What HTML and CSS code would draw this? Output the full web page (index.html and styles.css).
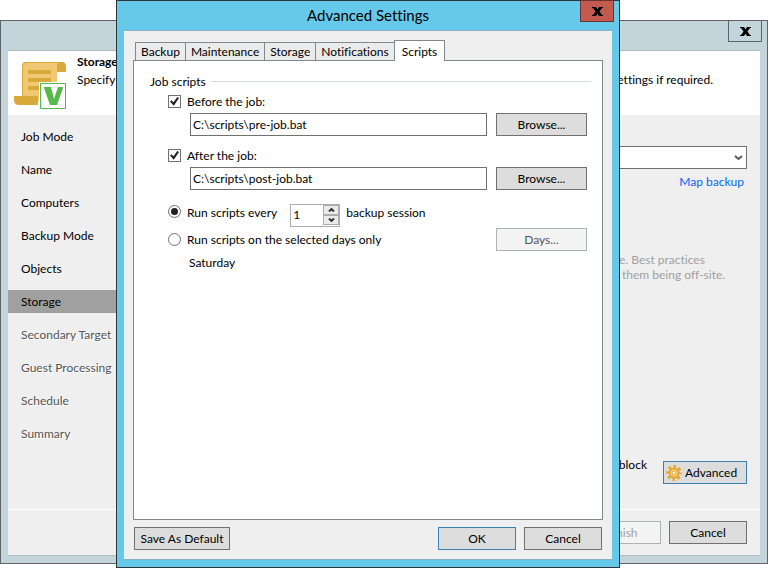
FILE: index.html
```html
<!DOCTYPE html>
<html lang="en">
<head>
<meta charset="UTF-8">
<meta name="viewport" content="width=device-width, initial-scale=1.0">
<title>Advanced Settings</title>
<link rel="stylesheet" href="styles.css">
</head>
<body>
<div class="wizard">
    <div class="wizard-bar">
        <button type="button" class="close" aria-label="Close wizard">
            <svg width="11" height="9" viewBox="0 0 11 9"><path d="M0 0h4l1.500 2.300L7 0h4v1h-1L7.500 4.500 10 8h1v1H7L5.500 6.700 4 9H0V8h1l2.500-3.500L1 1H0z"/></svg>
        </button>
    </div>
    <div class="wizard-content">
        <header class="wizard-header">
            <svg class="logo" width="54" height="50" viewBox="0 0 54 50">
                <path fill="#d9a93c" d="M13 1h35c3 0 4 2 4 5v5h-9z"/>
                <path fill="#f0c874" d="M12 1h34c-3 1-3 3-3 6v33H8V6c0-3 1-5 4-5z"/>
                <path fill="#d9a93c" d="M8 35V6c0-3 1-5 4-5h34v1H13c-3 0-4 2-4 4v29zM14 9h23v4H14zM14 17h23v4H14zM14 25h23v4H14zM0 35h24v9H5c-3 0-5-2-5-5z"/>
                <path fill="#fff" d="M25 21h28v28H25z"/>
                <path fill="#fff" stroke="#54b948" d="M26.500 22.500h25v25h-25z"/>
                <path fill="#54b948" d="M30 26h7l3 12 4-12h5v1l-6 17h-7l-6-17z"/>
            </svg>
            <div class="header-text">
                <h1>Storage</h1>
                <p><span>Specify</span><span>settings if required.</span></p>
            </div>
        </header>
        <div class="wizard-body">
            <nav class="steps">
                <a href="#">Job Mode</a>
                <a href="#">Name</a>
                <a href="#">Computers</a>
                <a href="#">Backup Mode</a>
                <a href="#">Objects</a>
                <a href="#" class="current">Storage</a>
                <a href="#" class="pending">Secondary Target</a>
                <a href="#" class="pending">Guest Processing</a>
                <a href="#" class="pending">Schedule</a>
                <a href="#" class="pending">Summary</a>
            </nav>
            <main class="storage">
                <div class="repository">
                    <select aria-label="Backup repository"><option></option></select>
                    <svg width="9" height="6" viewBox="0 0 9 6"><path d="M1 1l3.500 3L8 1" fill="none" stroke="#555" stroke-width="2"/></svg>
                </div>
                <a href="#" class="map-link">Map backup</a>
                <p class="hint"><span>e. Best practices</span><span>them being off-site.</span></p>
                <div class="advanced-row">
                    <span>block</span>
                    <button type="button" class="btn default advanced">
                        <svg width="16" height="16" viewBox="0 0 16 16" fill="none" stroke="#e3a72f">
                            <circle cx="8" cy="8" r="6.500" stroke-width="3" stroke-dasharray="2.500 2.605" stroke-dashoffset="1.250"/>
                            <circle cx="8" cy="8" r="4.500" fill="#f5d58e" stroke-width="2"/>
                            <circle cx="8" cy="8" r="2" fill="#efefef" stroke-width="1"/>
                        </svg>
                        Advanced
                    </button>
                </div>
            </main>
        </div>
        <footer class="wizard-footer">
            <button type="button" class="btn faded" disabled>Finish</button>
            <button type="button" class="btn">Cancel</button>
        </footer>
    </div>
</div>

<div class="dialog" role="dialog" aria-labelledby="dialog-title">
    <div class="dialog-bar">
        <h2 id="dialog-title">Advanced Settings</h2>
        <button type="button" class="close red" aria-label="Close">
            <svg width="11" height="9" viewBox="0 0 11 9"><path d="M0 0h4l1.500 2.300L7 0h4v1h-1L7.500 4.500 10 8h1v1H7L5.500 6.700 4 9H0V8h1l2.500-3.500L1 1H0z"/></svg>
        </button>
    </div>
    <form class="dialog-content">
        <div class="tabs">
            <button type="button" class="tab">Backup</button>
            <button type="button" class="tab">Maintenance</button>
            <button type="button" class="tab">Storage</button>
            <button type="button" class="tab">Notifications</button>
            <button type="button" class="tab active">Scripts</button>
        </div>
        <div class="panel">
            <h3>Job scripts</h3>
            <div class="options">
                <div class="option">
                    <input type="checkbox" id="before" checked>
                    <label for="before">Before the job:</label>
                </div>
                <div class="script">
                    <input type="text" value="C:\scripts\pre-job.bat" aria-label="Script before the job">
                    <button type="button" class="btn">Browse...</button>
                </div>
                <div class="option">
                    <input type="checkbox" id="after" checked>
                    <label for="after">After the job:</label>
                </div>
                <div class="script">
                    <input type="text" value="C:\scripts\post-job.bat" aria-label="Script after the job">
                    <button type="button" class="btn">Browse...</button>
                </div>
                <div class="option every">
                    <input type="radio" name="run" id="every" checked>
                    <label for="every">Run scripts every</label>
                    <span class="spinner">
                        <input type="number" id="count" value="1" min="1">
                        <span class="arrows">
                            <button type="button" aria-label="Increase"><svg width="7" height="4" viewBox="0 0 7 4"><path d="M1 3.500L3.500 1 6 3.500"/></svg></button>
                            <button type="button" aria-label="Decrease"><svg width="7" height="4" viewBox="0 0 7 4"><path d="M1 .5L3.500 3 6 .5"/></svg></button>
                        </span>
                    </span>
                    <label for="count">backup session</label>
                </div>
                <div class="option days">
                    <input type="radio" name="run" id="days">
                    <label for="days">Run scripts on the selected days only</label>
                    <button type="button" class="btn" disabled>Days...</button>
                </div>
                <p class="day-list">Saturday</p>
            </div>
        </div>
        <div class="dialog-footer">
            <button type="button" class="btn save">Save As Default</button>
            <button type="button" class="btn default">OK</button>
            <button type="button" class="btn">Cancel</button>
        </div>
    </form>
</div>
</body>
</html>
```
FILE: styles.css
```css
* {
    box-sizing: border-box;
}
body {
    margin: 0;
    min-height: 100vh;
    padding: 20px 0 4px;
    display: flex;
    background-color: #fff;
    color: #000;
    font-family: Lato, "Open Sans", sans-serif;
    font-size: 12px;
    font-variant-ligatures: none;
    line-height: 15px;
}
h1, h2, h3, p {
    margin: 0;
    font-size: 12px;
}
h2, h3 {
    font-weight: normal;
}
button, input, select {
    font: inherit;
    font-variant-ligatures: none;
    color: inherit;
    margin: 0;
    padding: 0;
    border-radius: 0;
}
a {
    color: inherit;
    text-decoration: none;
}
svg {
    display: block;
    flex: none;
}

/* Buttons */
.btn {
    min-width: 78px;
    height: 23px;
    border: 1px solid #707070;
    background-color: #ddd;
    white-space: nowrap;
}
.btn.default {
    border-color: #3c7fb1;
}
.btn:disabled {
    border-color: #adb2b5;
    background-color: #f4f4f4;
    color: #555;
}
.btn.faded:disabled {
    color: #a0a0a0;
}
.close {
    width: 34px;
    height: 22px;
    display: flex;
    align-items: center;
    justify-content: center;
    border: 1px solid #5a6266;
    background-color: #c3d5db;
}
.close.red {
    border-color: #6b3330;
    background-color: #c35a50;
}

/* Wizard window */
.wizard {
    flex: 1;
    display: flex;
    flex-direction: column;
    padding: 0 7px 7px;
    border: 1px solid #5f6468;
    background-color: #c3d5db;
}
.wizard-bar {
    height: 29px;
    display: flex;
    justify-content: flex-end;
}
.wizard-bar .close {
    margin-top: -1px;
    margin-right: -2px;
}
.wizard-content {
    flex: 1;
    display: flex;
    flex-direction: column;
    border-top: 1px solid #adbcc2;
    border-bottom: 1px solid #adbcc2;
    background-color: #efefef;
}
.wizard-header {
    height: 64px;
    display: flex;
    gap: 9px;
    padding: 3px 47px 0 6px;
    background-color: #fff;
}
.logo {
    margin-top: 7px;
}
.header-text {
    flex: 1;
}
.header-text p {
    display: flex;
    justify-content: space-between;
    margin-top: 3px;
}
.wizard-body {
    flex: 1;
    display: flex;
}
.steps {
    width: 140px;
    display: flex;
    flex-direction: column;
    gap: 10px;
    padding-top: 10px;
}
.steps a {
    padding: 4px 0 4px 13px;
    white-space: nowrap;
}
.steps .current {
    background-color: #a0a0a0;
}
.steps .pending {
    color: #555;
    text-shadow: 1px 1px #fff;
}
.storage {
    flex: 1;
    display: flex;
    flex-direction: column;
    padding: 31px 13px 25px 24px;
}
.repository {
    position: relative;
}
.repository select {
    display: block;
    width: 100%;
    height: 23px;
    border: 1px solid #707070;
    background-color: #fff;
    appearance: none;
}
.repository svg {
    position: absolute;
    right: 4px;
    top: 9px;
    pointer-events: none;
}
.map-link {
    align-self: flex-end;
    margin: 5px 3px 0 0;
    color: #0066ff;
}
.hint {
    width: 128px;
    display: flex;
    flex-direction: column;
    align-self: flex-end;
    margin-top: 63px;
    color: #a0a0a0;
}
.hint span:last-child {
    padding-left: 3px;
}
.advanced-row {
    display: flex;
    justify-content: flex-end;
    gap: 16px;
    margin-top: auto;
}
.advanced {
    display: flex;
    align-items: center;
    gap: 3px;
    min-width: 84px;
    margin-top: 4px;
    padding: 0 7px 0 2px;
}
.wizard-footer {
    display: flex;
    justify-content: flex-end;
    gap: 8px;
    padding: 11px 13px 11px 0;
    border-top: 1px solid #fff;
}

/* Advanced settings window, floats over the wizard */
.dialog {
    position: absolute;
    top: 0;
    bottom: 0;
    left: 116px;
    right: 148px;
    display: flex;
    flex-direction: column;
    padding: 0 7px 7px;
    border: 1px solid #2b343b;
    background-color: #66c9e9;
}
.dialog-bar {
    height: 29px;
    display: flex;
    justify-content: flex-end;
}
.dialog-bar h2 {
    flex: 1;
    padding-left: 32px;
    font-size: 15px;
    line-height: 29px;
    text-align: center;
}
.dialog-bar .close {
    margin-top: -1px;
    margin-right: -2px;
}
.dialog-content {
    flex: 1;
    display: flex;
    flex-direction: column;
    padding: 9px 9px 9px;
    border-top: 1px solid #8ab0c4;
    border-bottom: 1px solid #8ab0c4;
    background-color: #efefef;
}
.tabs {
    display: flex;
    align-items: flex-end;
    padding-left: 2px;
}
.tab {
    height: 18px;
    margin-right: -1px;
    padding: 0 5px;
    border: 1px solid #828790;
    border-bottom: 0;
    background-color: #ebebeb;
}
.tab.active {
    height: 21px;
    margin-bottom: -1px;
    padding: 0 7px;
    position: relative;
    background-color: #fff;
}
.panel {
    flex: 1;
    padding: 13px 11px 0 16px;
    border: 1px solid #828790;
    background-color: #fff;
}
.panel h3 {
    display: flex;
    align-items: center;
    gap: 5px;
}
.panel h3::after {
    content: "";
    flex: 1;
    height: 1px;
    background-color: #d5dbe0;
}
.options {
    padding: 5px 4px 0 18px;
}
.option {
    display: flex;
    align-items: center;
    gap: 6px;
}
.script {
    display: flex;
    gap: 9px;
    margin: 4px 0 12px 22px;
}
.script input {
    flex: 1;
    min-width: 0;
    height: 23px;
    padding: 0 2px;
    border: 1px solid #707070;
}
.script .btn, .days .btn {
    width: 91px;
}
input[type="checkbox"], input[type="radio"] {
    flex: none;
    width: 13px;
    height: 13px;
    display: grid;
    place-content: center;
    border: 1px solid #707070;
    background-color: #fff;
    appearance: none;
}
input[type="checkbox"]:checked::before {
    content: "";
    width: 9px;
    height: 9px;
    background-color: #212121;
    clip-path: polygon(0 50%, 15% 35%, 38% 58%, 82% 0, 100% 12%, 42% 98%);
}
input[type="radio"] {
    border-radius: 50%;
}
input[type="radio"]:checked::before {
    content: "";
    width: 7px;
    height: 7px;
    border-radius: 50%;
    background-color: #212121;
}
.every {
    align-items: flex-start;
    margin-top: 14px;
}
.every > input, .every > label {
    margin-top: 1px;
}
.every > label:first-of-type {
    margin-right: 7px;
}
.spinner {
    width: 50px;
    height: 23px;
    display: flex;
    border: 1px solid #abadb3;
    background-color: #fff;
}
.spinner input {
    flex: 1;
    min-width: 0;
    padding: 0 2px 3px;
    border: 0;
    background: none;
    appearance: textfield;
}
.spinner input::-webkit-inner-spin-button {
    display: none;
}
.arrows {
    width: 16px;
    display: flex;
    flex-direction: column;
}
.arrows button {
    height: 10px;
    display: flex;
    align-items: center;
    justify-content: center;
    border: 1px solid #abadb3;
    background-color: #ebebeb;
}
.arrows path {
    fill: none;
    stroke: #333;
    stroke-width: 2;
}
.days {
    margin-top: 1px;
}
.days .btn {
    margin-left: auto;
}
.day-list {
    margin: 4px 0 0 21px;
}
.dialog-footer {
    display: flex;
    gap: 8px;
    padding: 7px 1px 0;
}
.save {
    width: 96px;
    margin-right: auto;
}
```
